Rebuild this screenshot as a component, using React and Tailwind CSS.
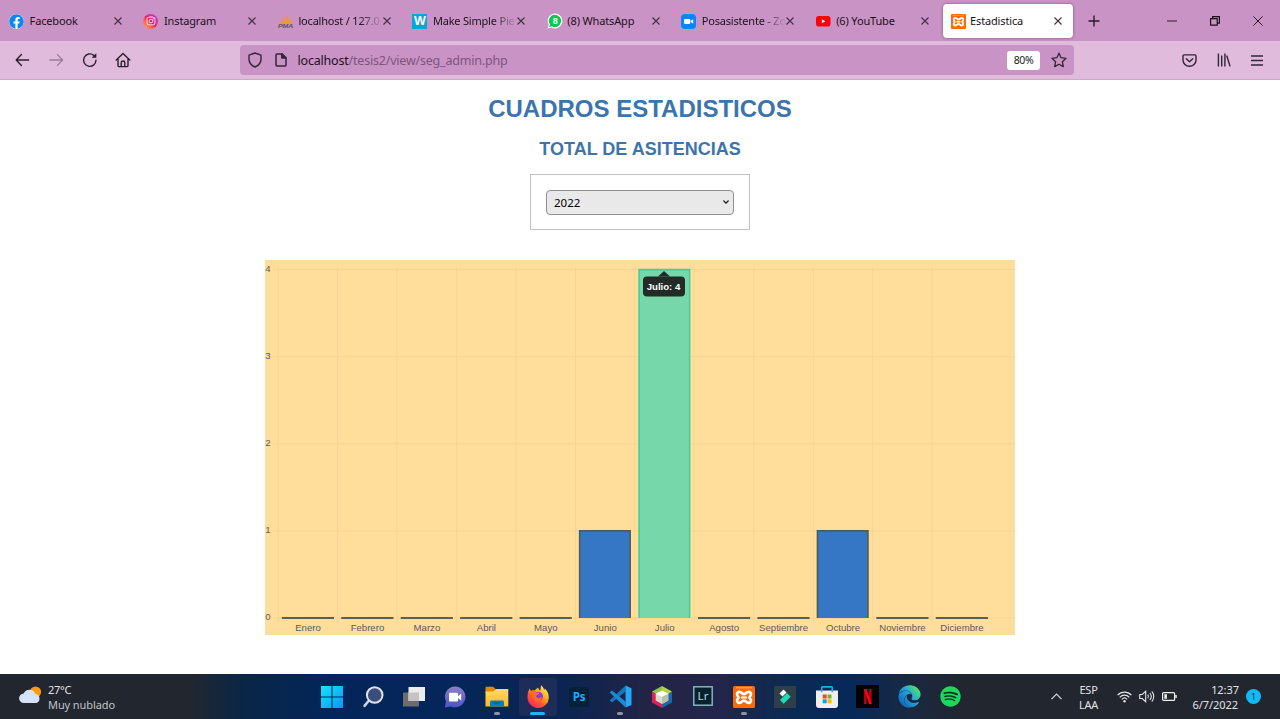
import React from "react";
import { FaEdge, FaSpotify, FaFacebook, FaInstagram } from "react-icons/fa";

const Close = () => (
  <svg width="8" height="8" viewBox="0 0 8 8" className="shrink-0" stroke="#41303f" strokeWidth="1.1" fill="none">
    <path d="M.5 .5 7.5 7.5M7.5 .5.5 7.5" />
  </svg>
);

const Xampp = ({ size }) => (
  <svg width={size} height={size} viewBox="0 0 22 22">
    <rect width="22" height="22" rx="1.5" fill="#f96a0b" />
    <path d="M3 1.800h16" stroke="#ffc79b" strokeWidth=".8" />
    <path
      d="M7.600 6.200c-2.600-1-4.100.8-3.400 2.800.4 1 1.200 1.500 1.200 2.400s-.8 1.400-1.200 2.400c-.7 2 .8 3.800 3.400 2.800l1.600-1.200c1-.8 2.600-.8 3.600 0l1.600 1.200c2.600 1 4.100-.8 3.400-2.800-.4-1-1.200-1.500-1.200-2.400s.8-1.400 1.200-2.400c.7-2-.8-3.800-3.400-2.800l-1.600 1.200c-1 .8-2.600.8-3.600 0z"
      fill="none"
      stroke="#fff"
      strokeWidth="2.700"
      strokeLinejoin="round"
    />
    <path d="M8.800 11.400h4.400" stroke="#fff" strokeWidth="2" strokeLinecap="round" />
  </svg>
);

const FacebookIcon = () => (
  <span className="flex size-[15px] items-center justify-center rounded-full bg-white">
    <FaFacebook size={15} color="#0a86f5" />
  </span>
);

const InstagramIcon = () => (
  <span className="flex size-[15px] items-center justify-center rounded-full bg-linear-to-tr from-[#ffb400] via-[#f5145f] to-[#a615e8]">
    <FaInstagram size={10} color="#fff" />
  </span>
);

const PmaIcon = () => (
  <svg width="16" height="15" viewBox="0 0 16 15">
    <path d="M1 9.500C4 8 5 5.500 5.400 3 6.500 5 6.400 7.500 5.600 9.500zM6 9.500C8.200 6.500 8.500 3 8 .2 10.500 3 11 6.500 10.400 9.500zM10.800 9.500c1-2 1-3.800.6-5.300 1.800 1.500 3.200 3.300 3.800 5.300z" fill="#f89428" />
    <text x="0" y="13.600" fontSize="5.400" fontStyle="italic" fontWeight="700" textLength="15" lengthAdjust="spacingAndGlyphs" fill="#5b5360" fontFamily="Liberation Sans, sans-serif">PMA</text>
  </svg>
);

const WIcon = () => (
  <span className="flex h-[15px] w-[15px] items-center justify-center bg-[#0aa3dc] font-['Liberation_Sans',sans-serif] text-[12.500px] font-bold leading-none text-white">W</span>
);

const WhatsIcon = () => (
  <svg width="16" height="16" viewBox="0 0 16 16">
    <path d="M8 .4a7.500 7.500 0 1 1-3.500 14.200L.6 15.500l1.100-3.800A7.500 7.500 0 0 1 8 .4z" fill="#fff" />
    <path d="M8 1.700A6.200 6.200 0 1 1 4.700 13.200L2.200 13.900l.8-2.500A6.200 6.200 0 0 1 8 1.700z" fill="#09c950" />
    <text x="8.100" y="11.200" textAnchor="middle" fontSize="9" fontWeight="700" fill="#fff" fontFamily="Liberation Sans, sans-serif">8</text>
  </svg>
);

const ZoomIcon = () => (
  <svg width="15" height="15" viewBox="0 0 15 15">
    <rect width="15" height="15" rx="4" fill="#0b84fb" />
    <rect x="3" y="4.900" width="6.300" height="5" rx="1.200" fill="#fff" />
    <path d="M9.800 6.800 12.200 5.200v4.500L9.800 8.100z" fill="#fff" />
  </svg>
);

const YoutubeIcon = () => (
  <svg width="15" height="15" viewBox="0 0 15 15">
    <rect x="0" y="2" width="14.500" height="10.600" rx="2.800" fill="#fb0007" />
    <path d="M5.900 5.300v4l3.500-2z" fill="#fff" />
  </svg>
);

const tabs = [
  { title: "Facebook", icon: <FacebookIcon /> },
  { title: "Instagram", icon: <InstagramIcon /> },
  { title: "localhost / 127.0", icon: <PmaIcon />, fade: true },
  { title: "Make Simple Pie", icon: <WIcon />, fade: true },
  { title: "(8) WhatsApp", icon: <WhatsIcon /> },
  { title: "Posasistente - Zo", icon: <ZoomIcon />, fade: true },
  { title: "(6) YouTube", icon: <YoutubeIcon /> },
];

const Tab = ({ title, icon, fade }) => (
  <div className="flex w-[134.450px] shrink-0 items-center pl-[9px] pr-[12.500px]">
    <span className="flex w-[20.600px] shrink-0 items-center">{icon}</span>
    <span
      className={
        fade
          ? "w-0 flex-1 whitespace-nowrap mask-r-from-72% mask-r-to-100% tracking-[-0.2px]"
          : "flex-1 whitespace-nowrap"
      }
    >
      {title}
    </span>
    <Close />
  </div>
);

function TabStrip() {
  return (
    <div className="flex h-[41px] items-stretch bg-[#ca93c5] pt-px font-['Noto_Sans',sans-serif] text-[11px] tracking-[-0.15px] text-[#1d101d]">
      {tabs.map((t) => (
        <Tab key={t.title} {...t} />
      ))}
      <div className="ml-[2px] mt-[3px] flex h-[34px] w-[130px] shrink-0 items-center rounded-[4px] bg-white pl-2 pr-[11px] shadow-[0_0_3px_rgba(80,20,80,.55)]">
        <span className="mr-1 flex"><Xampp size={15} /></span>
        <span className="flex-1">Estadistica</span>
        <Close />
      </div>
      <svg className="ml-[15px] mt-[14px] shrink-0" width="12" height="12" viewBox="0 0 12 12" stroke="#2b1a2b" strokeWidth="1.400">
        <path d="M6 .5v11M.5 6h11" />
      </svg>
      <div className="ml-auto flex items-center gap-[33px] pb-px pr-[17px]">
        <svg width="10" height="10" viewBox="0 0 10 10"><path d="M0 5h10" stroke="#2b1a2b" /></svg>
        <svg width="10" height="10" viewBox="0 0 10 10" fill="none" stroke="#1a0f1a" strokeWidth="1.200">
          <path d="M.6 2.600h6.600v6.600H.6zM2.600 2.600V.6h6.800v6.600H7.200" />
        </svg>
        <svg width="10" height="10" viewBox="0 0 10 10" stroke="#2b1a2b"><path d="M.4.4l9.200 9.200M9.600.4.4 9.600" /></svg>
      </div>
    </div>
  );
}

function Toolbar() {
  return (
    <div className="flex h-[39px] items-center border-b border-[#cfa6d0] bg-[#e0bbdc] font-['Noto_Sans',sans-serif]">
      <div className="flex w-[240px] shrink-0 items-center pl-[15px] text-[#2b1f2b]">
        <svg width="15" height="14" viewBox="0 0 15 14" fill="none" stroke="currentColor" strokeWidth="1.400" strokeLinecap="round" strokeLinejoin="round">
          <path d="M1.200 7h12.400M6.400 1.600 1.200 7l5.200 5.400" />
        </svg>
        <svg className="ml-[19px]" width="15" height="14" viewBox="0 0 15 14" fill="none" stroke="#9b7d99" strokeWidth="1.300" strokeLinecap="round" strokeLinejoin="round">
          <path d="M1 7h12.400M8.400 1.600 13.600 7l-5.200 5.400" />
        </svg>
        <svg className="ml-[18px]" width="16" height="16" viewBox="0 0 16 16" fill="none" stroke="currentColor" strokeWidth="1.400" strokeLinecap="round">
          <path d="M14 8.300A6.200 6.200 0 1 1 11.800 3.400L13 4.600" />
          <path d="M14.300 1.200v4.600H9.700z" fill="currentColor" stroke="none" />
        </svg>
        <svg className="ml-[17px]" width="16" height="16" viewBox="0 0 16 16" fill="none" stroke="currentColor" strokeWidth="1.400" strokeLinecap="round" strokeLinejoin="round">
          <path d="M1.200 8 8 1.400 14.800 8M3 7v6.400c0 .8.400 1.200 1.200 1.200h7.600c.8 0 1.200-.4 1.200-1.200V7M6.200 14.400V10.600c0-.9.700-1.600 1.800-1.600s1.800.7 1.800 1.600v3.800" />
        </svg>
      </div>
      <div className="flex h-[30px] w-[834px] shrink-0 items-center rounded-[4px] bg-[#ca93c5] pl-[8px] text-[#33253a]">
        <svg width="14" height="16" viewBox="0 0 14 16" fill="none" stroke="currentColor" strokeWidth="1.400" strokeLinejoin="round">
          <path d="M7 1 13 3.200V7c0 4-2.500 6.600-6 8-3.500-1.400-6-4-6-8V3.200z" />
        </svg>
        <svg className="ml-[13px]" width="12" height="14" viewBox="0 0 12 14" fill="none" stroke="currentColor" strokeWidth="1.500" strokeLinejoin="round">
          <path d="M2 .9h5l4 4v7.200c0 .6-.4 1-1 1H2c-.6 0-1-.4-1-1V1.900c0-.6.4-1 1-1z" />
          <path d="M6.800 1v4h4z" fill="currentColor" />
        </svg>
        <span className="ml-[10.500px] pt-[3px] text-[12.500px] tracking-[-0.2px] text-[#7c567d]">
          <span className="text-[#1d101d]">localhost</span>/tesis2/view/seg_admin.php
        </span>
        <span className="ml-auto flex h-[19px] w-[33px] items-center justify-center rounded-[3px] bg-white pt-[2px] text-[10.500px] tracking-[-0.4px] text-[#222]">80%</span>
        <svg className="ml-[11px] mr-[7px]" width="16" height="16" viewBox="0 0 16 16" fill="none" stroke="currentColor" strokeWidth="1.300" strokeLinejoin="round">
          <path d="m8 1.200 2.100 4.500 4.900.6-3.600 3.400.9 4.900L8 12.200l-4.300 2.400.9-4.900L1 6.300l4.900-.6z" />
        </svg>
      </div>
      <div className="ml-auto flex items-center gap-[20px] pr-[17px] text-[#33253a]">
        <svg width="15" height="13" viewBox="0 0 15 13" fill="none" stroke="currentColor" strokeWidth="1.400" strokeLinecap="round" strokeLinejoin="round">
          <path d="M2 .9h11c.6 0 1 .4 1 1V6c0 3.500-2.900 6.200-6.500 6.200S1 9.500 1 6V1.900c0-.6.4-1 1-1z" />
          <path d="m4.300 4.700 3.200 3 3.200-3" />
        </svg>
        <svg width="14" height="14" viewBox="0 0 14 14" fill="none" stroke="currentColor" strokeWidth="1.400">
          <path d="M1.400.5v13M4.700 2.500v11M7.900.5v13M9.700 2.500l3.400 10.900" />
        </svg>
        <svg width="12" height="11" viewBox="0 0 12 11" stroke="currentColor" strokeWidth="1.300">
          <path d="M0 1h12M0 5.500h12M0 10h12" />
        </svg>
      </div>
    </div>
  );
}

const months = [
  ["Enero", 0], ["Febrero", 0], ["Marzo", 0], ["Abril", 0], ["Mayo", 0], ["Junio", 1],
  ["Julio", 4], ["Agosto", 0], ["Septiembre", 0], ["Octubre", 1], ["Noviembre", 0], ["Diciembre", 0],
];
const STEP = 59.450;
const UNIT = 87.100;
const BASE = 358;

function Chart() {
  return (
    <svg className="mt-[30px] shrink-0 bg-[#ffdd9b]" width="750" height="375" viewBox="0 0 750 375" fontFamily="Liberation Sans, Arial, sans-serif" fontWeight="400">
      <g stroke="#f6d496" strokeWidth="1">
        {[0, 1, 2, 3, 4].map((v) => (
          <path key={v} d={`M8 ${BASE - v * UNIT}H750`} />
        ))}
        {months.map(([m], i) => (
          <path key={m} d={`M${13.200 + i * STEP} 7V362`} />
        ))}
      </g>
      {months.map(([m, v], i) => {
        const x = 17.400 + i * STEP;
        const top = BASE - v * UNIT;
        if (v === 0) return <path key={m} d={`M${x - 0.600} ${BASE}h52.200`} stroke="#57605a" strokeWidth="2" />;
        return (
          <g key={m}>
            <rect x={x} y={top} width="50.500" height={v * UNIT} fill={v === 4 ? "#76d7aa" : "#3576c5"} />
            <path d={`M${x} ${BASE}V${top}h50.500V${BASE}`} fill="none" stroke={v === 4 ? "#43cd9a" : "#525a59"} strokeWidth="1.600" />
          </g>
        );
      })}
      <g fill="#5c5b59" fontSize="9.600">
        {[0, 1, 2, 3, 4].map((v) => (
          <text key={v} x="5.600" y={BASE - v * UNIT + 2.400} textAnchor="end">{v}</text>
        ))}
        {months.map(([m], i) => (
          <text key={m} x={43 + i * STEP} y="371" textAnchor="middle">{m}</text>
        ))}
      </g>
      <path d="m399 11 6 5.500h-12z" fill="#222c27" />
      <rect x="378" y="16.500" width="42" height="20" rx="4" fill="#222c27" />
      <text x="398.500" y="30" textAnchor="middle" fontSize="9.600" fontWeight="700" fill="#fff">Julio: 4</text>
    </svg>
  );
}

const StartIcon = () => (
  <svg width="22" height="22" viewBox="0 0 22 22" fill="url(#win)">
    <path d="M0 0h10.500v10.500H0zM11.500 0H22v10.500H11.500zM0 11.500h10.500V22H0zM11.500 11.500H22V22H11.500z" />
  </svg>
);
const SearchIcon = () => (
  <svg width="22" height="22" viewBox="0 0 22 22">
    <path d="M7 14.500 2.500 19.800" stroke="#cfd3dd" strokeWidth="2.600" strokeLinecap="round" />
    <circle cx="12.700" cy="9" r="7.800" fill="#3a4d7c" stroke="#dfe2ea" strokeWidth="2" />
  </svg>
);
const TaskViewIcon = () => (
  <svg width="22" height="22" viewBox="0 0 22 22">
    <rect x="0" y="6.500" width="16" height="14" fill="#6d6d6d" />
    <rect x="5.500" y="1" width="16.500" height="14" fill="#ececec" />
    <rect x="5.500" y="6.500" width="10.500" height="8.500" fill="#c4c4c4" />
  </svg>
);
const ChatIcon = () => (
  <svg width="22" height="22" viewBox="0 0 22 22">
    <path d="M11.200.5a10.400 10.400 0 1 1-4.400 19.900L.8 21.400l1.200-5.800A10.400 10.400 0 0 1 11.200.5z" fill="url(#chat)" />
    <rect x="5" y="6.800" width="9" height="8.600" rx="1" fill="#fff" />
    <path d="m14 10.200 3.200-2.700v7.200L14 12z" fill="#fff" />
  </svg>
);
const FolderIcon = () => (
  <svg width="24" height="22" viewBox="0 0 24 22">
    <path d="M.5 2c0-.8.5-1.300 1.300-1.300h6.400L10.500 3v4H.5z" fill="#e08a0c" />
    <path d="M.5 5.500h8L10.800 3h12.500v17.500H.5z" fill="url(#folder)" />
    <path d="M5 20.500v-4.400c0-1 .6-1.600 1.600-1.600h10.800c1 0 1.600.6 1.600 1.600v4.400z" fill="#1678c4" />
    <path d="M8.500 17h7" stroke="#0b5596" strokeWidth="1.200" />
  </svg>
);
const FirefoxIcon = () => (
  <svg width="22" height="23" viewBox="0 0 22 23">
    <path d="M2.700 3.600c.3 1 .8 1.700 1.500 2.300 1.300-.7 2.600-.7 3.600-.3C9 3.800 10.300 3 11.300 2.700c.2 1.500 1 2.300 2 3L14 .2c1.500 1.200 2.600 2.800 3.200 4.700.5-.2.600-.9.400-1.600 2.700 2.300 4.200 5.500 4.200 9A10.600 10.600 0 0 1 .5 12.600C.4 9.200 1.200 6 2.700 3.600z" fill="url(#fox)" />
    <circle cx="11.400" cy="11.300" r="4.600" fill="#8a3fd0" />
    <path d="M4.200 5.900c2.500-1 4.600.2 5.500 1.700 1 .1 2 .2 2.900.5-.2 1.300-1.700 1.600-2.800 2.100-.8.500-.7 1.500 0 2.300 1.500 1.300 3.600.4 4.700-.8.700 2.900-1.500 4.800-4.300 4.500C6 15.800 4.100 10.700 4.200 5.900z" fill="#ff6a24" />
  </svg>
);
const PsIcon = () => (
  <svg width="20" height="20" viewBox="0 0 20 20">
    <rect width="20" height="20" rx="3" fill="#04203a" />
    <text x="10" y="14" textAnchor="middle" fontFamily="Noto Sans, sans-serif" fontWeight="700" fontSize="11.500" letterSpacing="-0.200" fill="#25a8f8">Ps</text>
  </svg>
);
const CodeIcon = () => (
  <svg width="23" height="23" viewBox="0 0 23 23">
    <path d="M16.500 6.500 3 17.500l-2.300-2L16.500.5z" fill="#1378bd" />
    <path d="M16.500 16.500 3 5.500.7 7.400 16.500 22.500z" fill="#1b8bd4" />
    <path d="M16.500.5 22.500 3.200v16.700l-6 2.700z" fill="#2aa6f2" />
  </svg>
);
const NetbeansIcon = () => (
  <svg width="20" height="22" viewBox="0 0 20 22">
    <path d="M10 0 0 5.500 4 9l6-4z" fill="#8fc34a" />
    <path d="m10 0 10 5.500L16 9l-6-4z" fill="#b4d43c" />
    <path d="M0 5.500v11L10 22v-5l-6-3.500V8z" fill="#d8235b" />
    <path d="M20 5.500v11L10 22v-5l6-3.500V8z" fill="#1d66ad" />
    <path d="m10 4.500 6.300 3.300V14.500L10 18l-6.300-3.500V7.800z" fill="#d8dcd0" />
    <path d="m10 4.500 6.300 3.300L10 11 3.700 7.800z" fill="#fff" />
    <path d="M10 11v7l6.300-3.500V7.800z" fill="#bcc3a4" />
  </svg>
);
const LrIcon = () => (
  <svg width="20" height="22" viewBox="0 0 20 22">
    <rect x=".8" y=".8" width="18.400" height="18.400" fill="#06222c" stroke="#8fbccb" strokeWidth="1.400" />
    <text x="10" y="14.200" textAnchor="middle" fontFamily="Noto Sans, sans-serif" fontSize="11.500" fill="#b6dbe8">Lr</text>
  </svg>
);
const FilmoraIcon = () => (
  <svg width="22" height="22" viewBox="0 0 22 22">
    <rect width="22" height="22" fill="#2f3f49" />
    <path d="m5.500 7.500 4-4L12.500 6.500l-4 4z" fill="#fff" />
    <path d="m13 7 3.700 3.700-7 7L6 14z" fill="#1fdcb5" />
  </svg>
);
const StoreIcon = () => (
  <svg width="22" height="22" viewBox="0 0 22 22">
    <path d="M0 4.500h22v14.500a3 3 0 0 1-3 3H3a3 3 0 0 1-3-3z" fill="#f1efee" />
    <path d="M5.700 6.200V1.800c0-.6.3-.9.900-.9h8.800c.6 0 .9.300.9.900v4.400" fill="none" stroke="#28a8ea" strokeWidth="1.600" />
    <path d="M6.700 8.500h4v4h-4z" fill="#ee4b23" />
    <path d="M11.500 8.500h4v4h-4z" fill="#7bb60c" />
    <path d="M6.700 13.300h4v4h-4z" fill="#159fe6" />
    <path d="M11.500 13.300h4v4h-4z" fill="#fab70a" />
  </svg>
);
const NetflixIcon = () => (
  <svg width="23" height="23" viewBox="0 0 23 23">
    <rect width="23" height="23" fill="#050203" />
    <path d="M8 4h2.700v15L8 19.300zM13 4h2.700v15.300L13 19z" fill="#a80610" />
    <path d="M8 4h2.700l5 15.300L13 19z" fill="#e90b17" />
  </svg>
);

const apps = [
  { id: "start", el: <StartIcon /> },
  { id: "search", el: <SearchIcon /> },
  { id: "tasks", el: <TaskViewIcon /> },
  { id: "chat", el: <ChatIcon /> },
  { id: "files", el: <FolderIcon />, running: true },
  { id: "firefox", el: <FirefoxIcon />, active: true },
  { id: "ps", el: <PsIcon /> },
  { id: "code", el: <CodeIcon />, running: true },
  { id: "netbeans", el: <NetbeansIcon /> },
  { id: "lr", el: <LrIcon /> },
  { id: "xampp", el: <Xampp size={22} />, running: true },
  { id: "filmora", el: <FilmoraIcon /> },
  { id: "store", el: <StoreIcon /> },
  { id: "netflix", el: <NetflixIcon /> },
  { id: "edge", el: <FaEdge size={23} fill="url(#edge)" /> },
  { id: "spotify", el: <span className="flex rounded-full bg-[#12301f]"><FaSpotify size={21} color="#1ed760" /></span> },
];

function Gradients() {
  return (
    <svg width="0" height="0" className="absolute">
      <defs>
        <linearGradient id="win" gradientUnits="userSpaceOnUse" x1="0" y1="0" x2="22" y2="22"><stop stopColor="#19e4fd" /><stop offset="1" stopColor="#0a94f5" /></linearGradient>
        <linearGradient id="chat" x1="0" y1="0" x2="0" y2="1"><stop stopColor="#8d7fc6" /><stop offset="1" stopColor="#4b55c4" /></linearGradient>
        <linearGradient id="folder" x1="0" y1="0" x2="0" y2="1"><stop stopColor="#ffdc68" /><stop offset="1" stopColor="#f9b91d" /></linearGradient>
        <linearGradient id="fox" x1=".85" y1=".05" x2=".2" y2=".95"><stop stopColor="#fff04a" /><stop offset=".35" stopColor="#ffb01c" /><stop offset=".65" stopColor="#ff5a2a" /><stop offset="1" stopColor="#f4256a" /></linearGradient>
        <linearGradient id="edge" x1=".9" y1=".2" x2=".1" y2=".9"><stop stopColor="#4fe06a" /><stop offset=".4" stopColor="#27a6dc" /><stop offset="1" stopColor="#0c62b8" /></linearGradient>
      </defs>
    </svg>
  );
}

function Taskbar() {
  return (
    <div className="flex h-[45px] shrink-0 items-stretch bg-[linear-gradient(90deg,#22262f_0,#22262f_190px,#0a2646_240px,#03255a_330px,#05265a_460px,#0c2450_570px,#232445_650px,#23254a_720px,#0b2a52_790px,#06295a_850px,#1a2840_910px,#22262f_970px)] font-['Noto_Sans',sans-serif] text-[11px] leading-[15px] text-[#e2e3e5]">
      <div className="flex w-[311px] shrink-0 items-center pl-[19px]">
        <svg width="23" height="18" viewBox="0 0 23 18" className="mb-1">
          <circle cx="16.500" cy="6" r="5.600" fill="#fb9b0b" />
          <path d="M5 17a4.700 4.700 0 0 1-.4-9.400A6.400 6.400 0 0 1 16.500 8a4.600 4.600 0 0 1 .6 9z" fill="#d5e1f5" />
        </svg>
        <div className="ml-[6px]">
          <div className="tracking-[-0.3px]">27°C</div>
          <div className="tracking-[-0.1px] text-[#bfc3c9]">Muy nublado</div>
        </div>
      </div>
      <div className="flex shrink-0">
        {apps.map((a) => (
          <div key={a.id} className="flex w-[41.260px] justify-center pt-[4px]">
            <div
              className={
                a.active
                  ? "flex h-[38px] w-[38px] flex-col items-center justify-end rounded-[4px] bg-[#1b2d58]"
                  : "flex h-[38px] w-[38px] flex-col items-center justify-end"
              }
            >
              <div className="flex h-[31px] items-center justify-center pt-[4px]">{a.el}</div>
              <div
                className={
                  a.active
                    ? "mb-px mt-[2px] h-[3px] w-[15px] shrink-0 rounded-full bg-[#1fb4ee]"
                    : a.running
                      ? "mb-px mt-[2px] h-[3px] w-[6px] shrink-0 rounded-full bg-[#8f959f]"
                      : "mb-px mt-[2px] h-[3px] w-[6px] shrink-0"
                }
              />
            </div>
          </div>
        ))}
      </div>
      <div className="ml-auto flex items-center pr-[19px]">
        <svg width="11" height="7" viewBox="0 0 11 7" fill="none" stroke="#d5d7da" strokeWidth="1.200"><path d="m.5 6.200 5-5.200 5 5.200" /></svg>
        <div className="ml-[16px] w-[21px] text-center text-[11px] tracking-[-0.2px]">ESP<br />LAA</div>
        <svg className="ml-[18px]" width="15" height="12" viewBox="0 0 15 12" fill="none" stroke="#e2e3e5" strokeWidth="1.200">
          <path d="M.6 4.200C4.400.2 10.600.2 14.400 4.200M2.700 6.300c2.700-2.800 6.900-2.800 9.600 0M4.800 8.300c1.600-1.600 3.800-1.600 5.400 0" />
          <circle cx="7.500" cy="10.200" r="1.200" fill="#e2e3e5" stroke="none" />
        </svg>
        <svg className="ml-[7px]" width="16" height="13" viewBox="0 0 16 13" fill="none" stroke="#e2e3e5" strokeWidth="1.100">
          <path d="M.7 4.500h2.500L6.700 1.300v10.400L3.200 8.500H.7zM8.800 4.700c.8 1 .8 2.600 0 3.600M10.800 3c1.700 2 1.700 5 0 7M12.800 1.300c2.600 3 2.600 7.400 0 10.400" />
        </svg>
        <svg className="ml-[7px]" width="15" height="9" viewBox="0 0 15 9" fill="none" stroke="#eceded" strokeWidth="1.200">
          <rect x=".6" y=".6" width="12" height="7.800" rx="1" />
          <rect x="2.300" y="2.200" width="2.600" height="4.600" fill="#eceded" stroke="none" />
          <path d="M14 3v3" strokeWidth="1.500" />
        </svg>
        <div className="ml-[14px] w-[48px] whitespace-nowrap pr-px text-right tracking-[-0.050px]"><span className="-mr-px">12:37</span><br />6/7/2022</div>
        <span className="ml-[7px] flex size-[15px] items-center justify-center rounded-full bg-[#12b9f5] text-[9px] leading-none text-[#12303c]">1</span>
      </div>
    </div>
  );
}

export default function App() {
  return (
    <div className="flex h-[719px] w-[1280px] flex-col overflow-hidden bg-white">
      <Gradients />
      <TabStrip />
      <Toolbar />
      <main className="flex flex-1 flex-col items-center font-['Liberation_Sans',Arial,sans-serif] font-bold text-[#3c74ad]">
        <h1 className="mt-[13px] text-[24px] leading-[32px]">CUADROS ESTADISTICOS</h1>
        <h2 className="mt-[12px] text-[18px] leading-[24px]">TOTAL DE ASITENCIAS</h2>
        <div className="mt-[13px] flex h-[56px] w-[220px] shrink-0 items-center justify-center border border-[#c5c3c1]">
          <div className="flex h-[25px] w-[188px] items-center justify-between rounded-[4px] border border-[#8f8f9a] bg-[#e9e9ea] pl-[7px] pr-[4px] font-['Noto_Sans',sans-serif] text-[11.500px] font-normal text-black">
            <span className="pt-px">2022</span>
            <svg width="6" height="4" viewBox="0 0 6 4" fill="none" stroke="#222" strokeWidth="1.200"><path d="M.4.500 3 3.200 5.600.500" /></svg>
          </div>
        </div>
        <Chart />
      </main>
      <Taskbar />
    </div>
  );
}
